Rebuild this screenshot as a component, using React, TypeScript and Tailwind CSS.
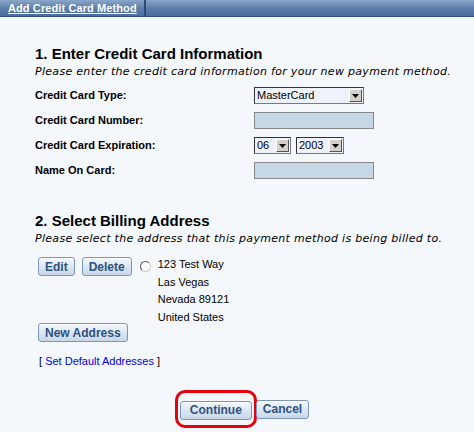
import React from 'react';

const labelCls = "font-['Liberation_Sans',Arial,sans-serif] font-bold text-[11px] text-black";
const btnCls =
  "h-[19px] px-[6px] rounded-[3px] border border-[#7b96b9] bg-gradient-to-b from-[#f3f7fc] to-[#c7d7ea] text-[#2f527f] font-bold text-[12px] leading-none font-['Liberation_Sans',Arial,sans-serif] shadow-[inset_0_1px_0_#ffffff]";

const FakeSelect: React.FC<{ value: string; width: string }> = ({ value, width }) => (
  <div className={`flex items-center h-[17px] ${width} border border-[#7a7a7a] border-t-[#333] border-l-[#333] bg-[#eef2fa] pl-[2px] pr-[1px]`}>
    <span className="flex-1 text-[11px] leading-none text-black font-['Liberation_Sans',Arial,sans-serif]">{value}</span>
    <span className="w-[13px] h-[13px] bg-[#d4d0c8] border border-[#fff] border-r-[#555] border-b-[#555] flex items-center justify-center">
      <svg width="7" height="4" viewBox="0 0 7 4"><path d="M0 0h7L3.5 4z" fill="#000" /></svg>
    </span>
  </div>
);

const FakeInput: React.FC = () => (
  <div className="h-[17px] w-[120px] bg-[#c6d7e6] border border-[#888]" />
);

export default function App() {
  const rows: { label: string; field: React.ReactNode }[] = [
    { label: 'Credit Card Type:', field: <FakeSelect value="MasterCard" width="w-[110px]" /> },
    { label: 'Credit Card Number:', field: <FakeInput /> },
    {
      label: 'Credit Card Expiration:',
      field: (
        <div className="flex gap-[5px]">
          <FakeSelect value="06" width="w-[37px]" />
          <FakeSelect value="2003" width="w-[48px]" />
        </div>
      ),
    },
    { label: 'Name On Card:', field: <FakeInput /> },
  ];

  return (
    <div className="w-[474px] h-[432px] bg-[#f4f7fb] overflow-hidden font-['Liberation_Sans',Arial,sans-serif]">
      {/* title bar */}
      <div className="h-[17px] flex bg-gradient-to-b from-[#8aa6c8] via-[#5d80ab] to-[#4a6d9b] border-b border-[#2e4d78]">
        <div className="pl-[8px] pr-[7px] flex items-center border-r-2 border-r-[#2d4a72]">
          <span className="text-white font-bold text-[11px] tracking-[0.1px] underline leading-none">Add Credit Card Method</span>
        </div>
      </div>

      <div className="pl-[35px] pt-[28px]">
        <h2 className="font-bold text-[15px] leading-[18px] text-black">1. Enter Credit Card Information</h2>
        <p className="font-['DejaVu_Sans',Verdana,sans-serif] italic text-[11px] leading-[14px] mt-[2px] text-black tracking-[0.3px]">
          Please enter the credit card information for your new payment method.
        </p>

        <div className="mt-[8px] flex flex-col gap-[8px]">
          {rows.map((r) => (
            <div key={r.label} className="flex items-center h-[17px]">
              <span className={`${labelCls} w-[219px]`}>{r.label}</span>
              {r.field}
            </div>
          ))}
        </div>

        <h2 className="font-bold text-[15px] leading-[18px] text-black mt-[33px]">2. Select Billing Address</h2>
        <p className="font-['DejaVu_Sans',Verdana,sans-serif] italic text-[11px] leading-[14px] mt-[2px] text-black tracking-[0.3px]">
          Please select the address that this payment method is being billed to.
        </p>

        <div className="flex mt-[10px] ml-[3px]">
          <div className="flex gap-[7px] pt-[1px]">
            <button className={btnCls}>Edit</button>
            <button className={btnCls}>Delete</button>
          </div>
          <div className="ml-[8px] mt-[5px] w-[11px] h-[11px] rounded-full bg-white border border-[#555] border-b-[#ccc] border-r-[#ccc]" />
          <div className="ml-[7px] text-[11px] leading-[17.5px] text-black">
            <div>123 Test Way</div>
            <div>Las Vegas</div>
            <div>Nevada 89121</div>
            <div>United States</div>
          </div>
        </div>

        <button className={`${btnCls} block mt-[-3px] ml-[3px]`}>New Address</button>

        <div className="mt-[12px] ml-[4px] text-[11px] leading-[14px] text-black">
          [ <a className="text-[#0000ee] cursor-pointer">Set Default Addresses</a> ]
        </div>
      </div>

      <div className="flex justify-center items-center mt-[22px] pl-[10px]">
        <div className="rounded-[10px] border-[3px] border-[#e8000b] px-[2px] py-[4px] -mr-[1px]">
          <button className={`${btnCls} px-[9px]`}>Continue</button>
        </div>
        <button className={btnCls}>Cancel</button>
      </div>
    </div>
  );
}
